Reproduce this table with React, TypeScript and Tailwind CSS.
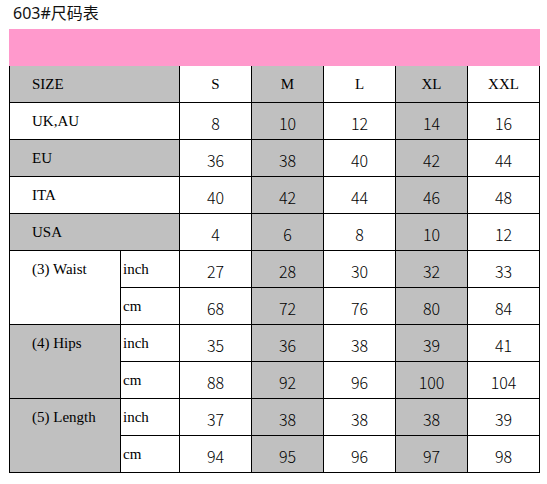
import clsx from "clsx"

const sizes = ["S", "M", "L", "XL", "XXL"]

const simpleRows = [
  { label: "UK,AU", gray: false, values: ["8", "10", "12", "14", "16"] },
  { label: "EU", gray: true, values: ["36", "38", "40", "42", "44"] },
  { label: "ITA", gray: false, values: ["40", "42", "44", "46", "48"] },
  { label: "USA", gray: true, values: ["4", "6", "8", "10", "12"] },
]

const groups = [
  {
    label: "(3) Waist",
    gray: false,
    rows: [
      { unit: "inch", values: ["27", "28", "30", "32", "33"] },
      { unit: "cm", values: ["68", "72", "76", "80", "84"] },
    ],
  },
  {
    label: "(4) Hips",
    gray: true,
    rows: [
      { unit: "inch", values: ["35", "36", "38", "39", "41"] },
      { unit: "cm", values: ["88", "92", "96", "100", "104"] },
    ],
  },
  {
    label: "(5) Length",
    gray: true,
    rows: [
      { unit: "inch", values: ["37", "38", "38", "38", "39"] },
      { unit: "cm", values: ["94", "95", "96", "97", "98"] },
    ],
  },
]

const serif = "font-['Liberation_Serif','Times_New_Roman',serif] text-[15px]"
const digits = "font-['Noto_Sans_CJK_SC',sans-serif] font-light text-[16px]"

function Cell({ gray, className, children }: any) {
  return (
    <div
      className={clsx(
        "flex items-center border-r border-b border-black text-black",
        gray ? "bg-[#c0c0c0]" : "bg-white",
        className
      )}
    >
      {children}
    </div>
  )
}

function Values({ values }: { values: string[] }) {
  return (
    <>
      {values.map((v, i) => (
        <Cell key={i} gray={i === 1 || i === 3} className={clsx("justify-center pt-[3px]", digits)}>
          {v}
        </Cell>
      ))}
    </>
  )
}

export default function App() {
  return (
    <div className="w-[547px] h-[484px] bg-white pl-[9px] overflow-hidden">
      <div className="h-[29px] pl-[4px] pt-[2px] text-[16px] leading-[22px] text-[#111] font-['Noto_Sans','Noto_Sans_CJK_SC',sans-serif]">
        603#尺码表
      </div>
      <div className="w-[531px] h-[37px] bg-[#ff99cc]"></div>
      <div className="grid grid-cols-[111px_59px_repeat(5,72px)] auto-rows-[37px] w-[531px] border-l border-black">
        <Cell gray className={clsx("col-span-2 pl-[22px]", serif)}>SIZE</Cell>
        {sizes.map((s, i) => (
          <Cell key={s} gray={i === 1 || i === 3} className={clsx("justify-center", serif)}>
            {s}
          </Cell>
        ))}

        {simpleRows.map((row) => (
          <div key={row.label} className="contents">
            <Cell gray={row.gray} className={clsx("col-span-2 pl-[22px]", serif)}>
              {row.label}
            </Cell>
            <Values values={row.values} />
          </div>
        ))}

        {groups.map((g) => (
          <div key={g.label} className="contents">
            <Cell gray={g.gray} className={clsx("row-span-2 items-start pl-[22px]", serif)}>
              <div className="h-[36px] flex items-center">{g.label}</div>
            </Cell>
            {g.rows.map((r) => (
              <div key={r.unit} className="contents">
                <Cell className={clsx("pl-[2px]", serif)}>{r.unit}</Cell>
                <Values values={r.values} />
              </div>
            ))}
          </div>
        ))}
      </div>
    </div>
  )
}
